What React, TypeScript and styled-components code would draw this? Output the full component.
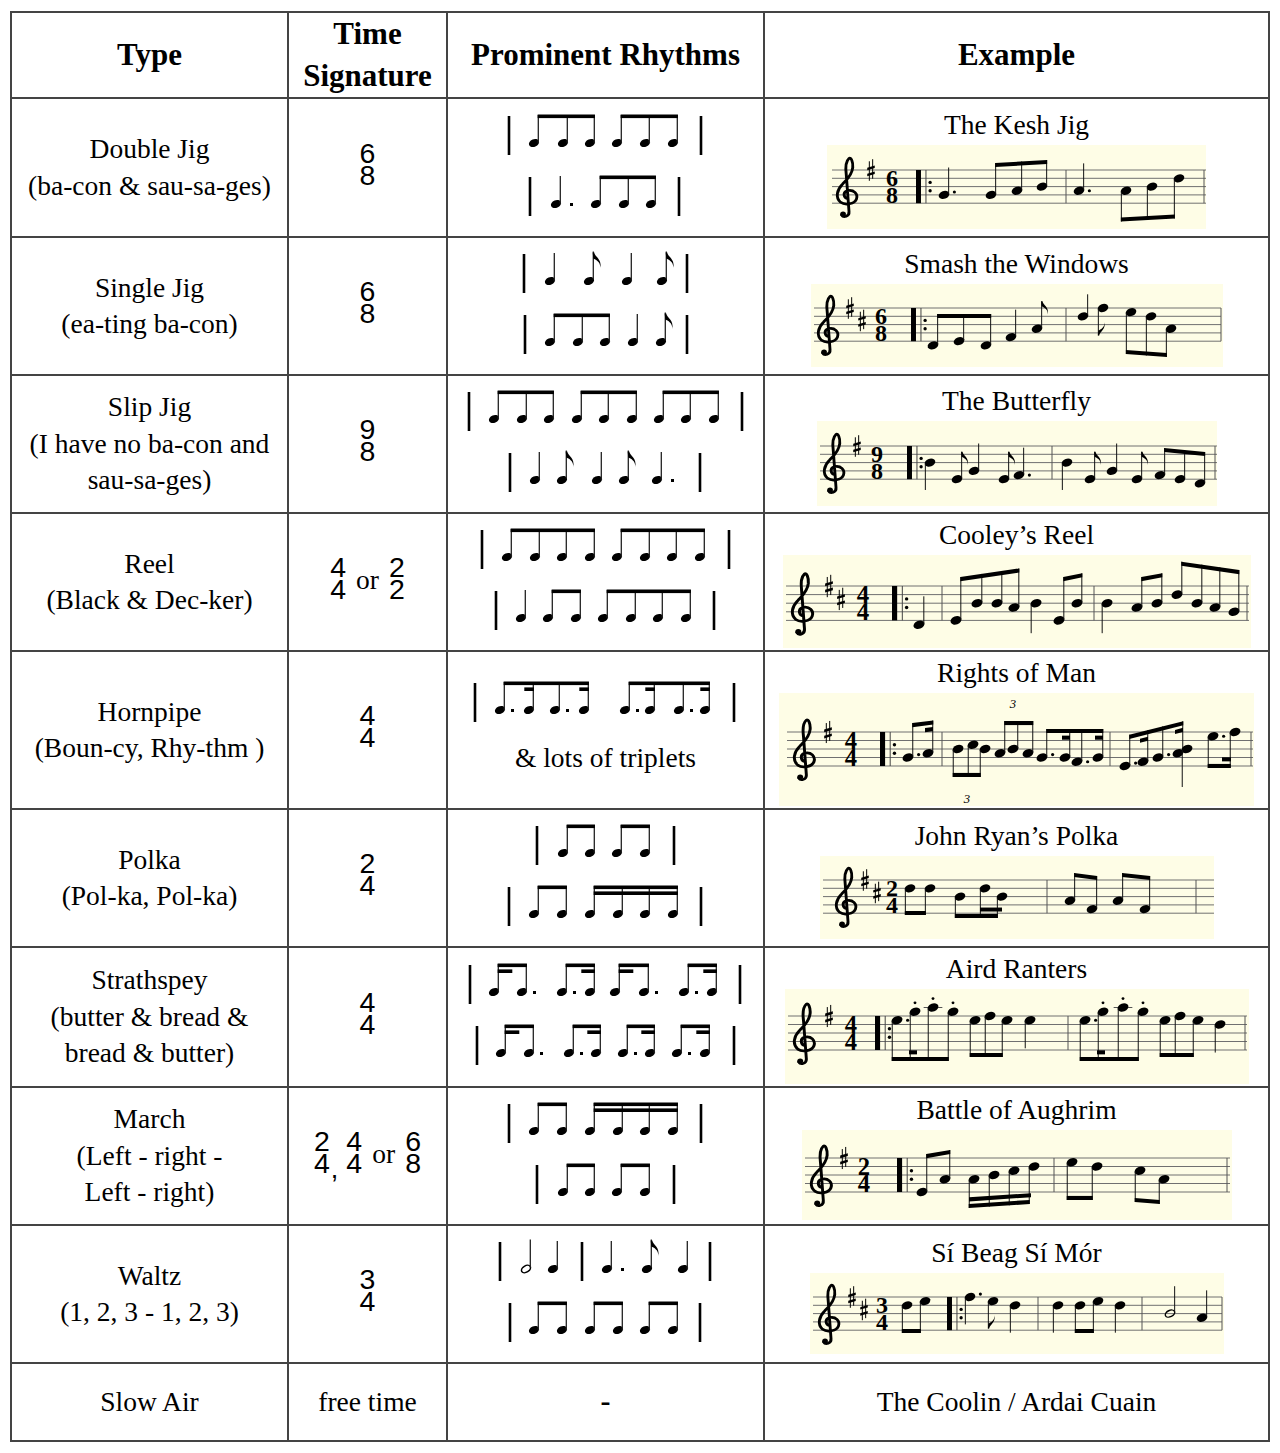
import React from "react";
import styled, { createGlobalStyle } from "styled-components";

const GlobalStyle = createGlobalStyle`
  body {
    margin: 0;
    background: #fff;
  }
`;

const Page = styled.div`
  padding: 11px 10px;
  font-family: "Liberation Serif", "Times New Roman", serif;
  color: #000;
`;

const Table = styled.table`
  border-collapse: collapse;
  table-layout: fixed;
  width: 1258px;
`;

const Col = styled.col<{ $w: number }>`
  width: ${(p) => p.$w}px;
`;

const Row = styled.tr<{ $h: number }>`
  height: ${(p) => p.$h}px;
`;

const HeadCell = styled.th`
  border: 2px solid #444;
  padding: 0;
  font-size: 31px;
  line-height: 42px;
  font-weight: 700;
  text-align: center;
  vertical-align: middle;
`;

const Cell = styled.td`
  border: 2px solid #444;
  padding: 0;
  font-size: 27.5px;
  line-height: 36.5px;
  text-align: center;
  vertical-align: middle;
`;

const RhythmCell = styled(Cell)`
  padding-bottom: 5px;
`;

const RhythmStack = styled.div`
  display: flex;
  flex-direction: column;
  align-items: center;
  gap: 15px;
`;

const SigWrap = styled.div`
  display: flex;
  justify-content: center;
  align-items: center;
  gap: 10px;
  padding-bottom: 8px;
  line-height: 22px;
`;

const Frac = styled.span`
  display: block;
  text-align: center;
  font-family: "Liberation Sans", Arial, sans-serif;
  font-size: 28.5px;
  line-height: 22px;
`;

const Comma = styled.span`
  align-self: flex-end;
  margin-left: -9px;
  margin-right: -2px;
  margin-bottom: -6px;
  font-family: "Liberation Sans", Arial, sans-serif;
  font-size: 27px;
`;

const Or = styled.span`
  font-size: 27.5px;
  padding-top: 4px;
`;

const Dash = styled.span`
  font-weight: 700;
  font-size: 30px;
`;

const ExampleBox = styled.div`
  display: flex;
  flex-direction: column;
  align-items: center;
`;

const ExTitle = styled.div`
  line-height: 36px;
`;

const Sheet = styled.svg`
  display: block;
  margin-top: 2px;
`;

const LineSvg = styled.svg`
  display: block;
`;

/* ---------- rhythm lines (page x coordinates) ---------- */

type RNote = [number, string]; // q quarter, d dotted quarter, e flagged eighth, h half, b beamed, B beamed dotted
type RLine = {
  bars: number[];
  notes: RNote[];
  beams?: [number, number, number][];
  parts?: [number, number, number?][];
};

const RX0 = 446;
const HY = 31;

const rFlag = (sx: number) =>
  `M${sx - 0.65} 2.5 h1.6 c0.6 4.5 8 6.5 6 15.5 c0.6 -6 -4.5 -8.5 -6.95 -9.5 z`;

function RhythmLine({ line }: { line: RLine }) {
  const sx = (cx: number) => cx + 4.3;
  return (
    <LineSvg width={317} height={46} viewBox={`${RX0} 0 317 46`}>
      {line.bars.map((x) => (
        <rect key={"bar" + x} x={x - 1.3} y={4} width={2.6} height={39} fill="#000" />
      ))}
      {line.notes.map(([x, t], i) => (
        <g key={i}>
          {t === "h" ? (
            <ellipse
              cx={x}
              cy={HY}
              rx={4.9}
              ry={3.2}
              transform={`rotate(-32 ${x} ${HY})`}
              fill="none"
              stroke="#000"
              strokeWidth={1.5}
            />
          ) : (
            <ellipse cx={x} cy={HY} rx={5.3} ry={3.8} transform={`rotate(-22 ${x} ${HY})`} fill="#000" />
          )}
          <rect x={sx(x) - 0.65} y={t === "h" || t === "e" ? 1.5 : 3} width={1.3} height={HY - 3} fill="#222" />
          {(t === "d" || t === "B") && <rect x={x + (t === "d" ? 14 : 11)} y={HY - 1} width={3} height={3} fill="#000" />}
          {t === "e" && <path d={rFlag(sx(x))} fill="#000" />}
        </g>
      ))}
      {(line.beams || []).map(([a, b, lv], i) => {
        const x1 = sx(line.notes[a][0]) - 0.65;
        const x2 = sx(line.notes[b][0]) + 0.65;
        const y = lv === 1 ? 2.5 : 8.4;
        return <rect key={"bm" + i} x={x1} y={y} width={x2 - x1} height={3.6} fill="#000" />;
      })}
      {(line.parts || []).map(([a, dir, len], i) => {
        const s = sx(line.notes[a][0]);
        const l = len ?? 11;
        const x1 = dir > 0 ? s - 0.65 : s - l;
        return <rect key={"pt" + i} x={x1} y={8.4} width={l + 0.65} height={3.6} fill="#000" />;
      })}
    </LineSvg>
  );
}

/* ---------- example staves ---------- */

type SN = {
  x: number;
  s: number;
  d: "u" | "d";
  dot?: boolean;
  flag?: boolean;
  half?: boolean;
  len?: number;
  st?: boolean;
};
type SB = { n: number[]; y1: number; y2: number; sub?: [number, number][] };
type Ex = {
  title: string;
  w: number;
  h: number;
  top: number;
  sp: number;
  x0: number;
  x1: number;
  clef: number;
  keys: [number, number][];
  ts: [number, string, string];
  rep?: number;
  bars: number[];
  notes: SN[];
  beams: SB[];
  texts?: [number, number, string][];
};

const CLEF =
  "M13 35 C8 34 7 27 12 25 C19 23 24 29 22 35 C20 41 10 43 5 39 C-1 33 1 24 7 17 C11 12 17 7 18 -3 C18.5 -10 16 -16 14 -14 C11 -11 10 -4 11 5 L14 50 C14.5 56 8 58 6 54";

function Sharp({ x, y, sp }: { x: number; y: number; sp: number }) {
  const t = sp * 0.3;
  const hw = sp * 0.45;
  return (
    <g>
      <line x1={x - sp * 0.2} y1={y - sp * 1.05} x2={x - sp * 0.2} y2={y + sp * 1.3} stroke="#000" strokeWidth={1} />
      <line x1={x + sp * 0.2} y1={y - sp * 1.3} x2={x + sp * 0.2} y2={y + sp * 1.05} stroke="#000" strokeWidth={1} />
      <polygon
        points={`${x - hw},${y - sp * 0.28} ${x + hw},${y - sp * 0.55} ${x + hw},${y - sp * 0.55 + t} ${x - hw},${y - sp * 0.28 + t}`}
        fill="#000"
      />
      <polygon
        points={`${x - hw},${y + sp * 0.45} ${x + hw},${y + sp * 0.18} ${x + hw},${y + sp * 0.18 + t} ${x - hw},${y + sp * 0.45 + t}`}
        fill="#000"
      />
    </g>
  );
}

function Staff({ ex }: { ex: Ex }) {
  const { sp, top } = ex;
  const bot = top + 4 * sp;
  const yOf = (s: number) => bot - (s * sp) / 2;
  const stemX = (n: SN) => (n.d === "u" ? n.x + sp * 0.56 : n.x - sp * 0.56);
  const tips = ex.notes.map((n) => {
    const L = n.len ?? 3.3 * sp;
    return n.d === "u" ? yOf(n.s) - L : yOf(n.s) + L;
  });
  const bt = sp * 0.48;
  const beamEls: React.ReactNode[] = [];
  ex.beams.forEach((b, bi) => {
    const first = ex.notes[b.n[0]];
    const last = ex.notes[b.n[b.n.length - 1]];
    const xa = stemX(first);
    const xb = stemX(last);
    const lineY = (x: number) => b.y1 + ((b.y2 - b.y1) * (x - xa)) / (xb - xa);
    b.n.forEach((i) => {
      tips[i] = lineY(stemX(ex.notes[i]));
    });
    const sg = first.d === "u" ? 1 : -1;
    const poly = (x1: number, x2: number, off: number) => {
      const y1 = lineY(x1) + sg * off;
      const y2 = lineY(x2) + sg * off;
      return `${x1},${y1} ${x2},${y2} ${x2},${y2 + sg * bt} ${x1},${y1 + sg * bt}`;
    };
    beamEls.push(<polygon key={"b" + bi} points={poly(xa - 0.5, xb + 0.5, 0)} fill="#000" />);
    (b.sub || []).forEach(([s1, s2], si) => {
      beamEls.push(<polygon key={"s" + bi + "-" + si} points={poly(s1, s2, sp * 0.78)} fill="#000" />);
    });
  });
  const sc = sp / 10;
  return (
    <Sheet width={ex.w} height={ex.h} viewBox={`0 0 ${ex.w} ${ex.h}`}>
      <rect x={0} y={0} width={ex.w} height={ex.h} fill="#FEFDE6" />
      {[0, 1, 2, 3, 4].map((k) => (
        <line key={k} x1={ex.x0} x2={ex.x1} y1={top + k * sp} y2={top + k * sp} stroke="#707070" strokeWidth={1} />
      ))}
      <g transform={`translate(${ex.clef} ${top}) scale(${sc * 1.12} ${sc})`}>
        <path d={CLEF} fill="none" stroke="#000" strokeWidth={3.1} strokeLinecap="round" />
        <circle cx={7.6} cy={53} r={3.1} fill="#000" />
      </g>
      {ex.keys.map(([x, s], i) => (
        <Sharp key={i} x={x} y={yOf(s)} sp={sp} />
      ))}
      <text fontSize={sp * 2.9} fontWeight={700} textAnchor="middle" fontFamily="Liberation Serif, serif">
        <tspan x={ex.ts[0]} y={top + 2 * sp - 0.3}>
          {ex.ts[1]}
        </tspan>
        <tspan x={ex.ts[0]} y={bot - 0.3}>
          {ex.ts[2]}
        </tspan>
      </text>
      {ex.rep !== undefined && (
        <g>
          <rect x={ex.rep} y={top} width={sp * 0.6} height={4 * sp} fill="#000" />
          <line x1={ex.rep + sp * 1.2} x2={ex.rep + sp * 1.2} y1={top} y2={bot} stroke="#444" strokeWidth={1} />
          <circle cx={ex.rep + sp * 1.7} cy={top + 1.5 * sp} r={sp * 0.2} fill="#000" />
          <circle cx={ex.rep + sp * 1.7} cy={top + 2.5 * sp} r={sp * 0.2} fill="#000" />
        </g>
      )}
      {ex.bars.map((x) => (
        <line key={"bar" + x} x1={x} x2={x} y1={top} y2={bot} stroke="#555" strokeWidth={1} />
      ))}
      {ex.notes.map((n, i) => {
        const y = yOf(n.s);
        const sx = stemX(n);
        const ledgers: number[] = [];
        for (let s = 10; s <= n.s; s += 2) ledgers.push(yOf(s));
        for (let s = -2; s >= n.s; s -= 2) ledgers.push(yOf(s));
        const onLine = n.s % 2 === 0;
        return (
          <g key={i}>
            {ledgers.map((ly, li) => (
              <line key={li} x1={n.x - sp * 1.1} x2={n.x + sp * 1.1} y1={ly} y2={ly} stroke="#555" strokeWidth={1} />
            ))}
            {n.half ? (
              <ellipse
                cx={n.x}
                cy={y}
                rx={sp * 0.6}
                ry={sp * 0.38}
                transform={`rotate(-25 ${n.x} ${y})`}
                fill="none"
                stroke="#000"
                strokeWidth={1.4}
              />
            ) : (
              <ellipse cx={n.x} cy={y} rx={sp * 0.66} ry={sp * 0.47} transform={`rotate(-20 ${n.x} ${y})`} fill="#000" />
            )}
            <line x1={sx} x2={sx} y1={y + (n.d === "u" ? -1 : 1)} y2={tips[i]} stroke="#111" strokeWidth={1} />
            {n.dot && <circle cx={n.x + sp * 1.25} cy={onLine ? y - sp * 0.35 : y} r={sp * 0.19} fill="#000" />}
            {n.st && <circle cx={n.x} cy={n.d === "u" ? y + sp * 1.05 : y - sp * 1.05} r={sp * 0.17} fill="#000" />}
            {n.flag && (
              <path
                transform={`translate(${sx} ${tips[i]}) scale(${sp / 8.5} ${n.d === "u" ? sp / 8.5 : -sp / 8.5})`}
                d="M-0.5 0 h1.4 c0.6 4 7 6 5.3 13.5 c0.4 -5.5 -4 -7.5 -6.2 -8.5 z"
                fill="#000"
              />
            )}
          </g>
        );
      })}
      {beamEls}
      {(ex.texts || []).map(([x, y, t], i) => (
        <text
          key={"t" + i}
          x={x}
          y={y}
          fontSize={sp * 1.5}
          fontStyle="italic"
          textAnchor="middle"
          fontFamily="Liberation Serif, serif"
        >
          {t}
        </text>
      ))}
    </Sheet>
  );
}

/* ---------- data ---------- */

const b8 = (xs: number[]): RNote[] => xs.map((x) => [x, "b"] as RNote);

const RH: Record<string, RLine[]> = {
  doubleJig: [
    { bars: [508, 700], notes: b8([533, 562, 589, 616, 644, 672]), beams: [[0, 2, 1], [3, 5, 1]] },
    { bars: [529, 678], notes: [[555, "d"], [595, "b"], [623, "b"], [650, "b"]], beams: [[1, 3, 1]] },
  ],
  singleJig: [
    { bars: [523, 686], notes: [[549, "q"], [588, "e"], [626, "q"], [661, "e"]] },
    { bars: [524, 686], notes: [[549, "b"], [577, "b"], [604, "b"], [632, "q"], [660, "e"]], beams: [[0, 2, 1]] },
  ],
  slipJig: [
    {
      bars: [468, 741],
      notes: b8([493, 521, 548, 576, 603, 631, 658, 685, 713]),
      beams: [[0, 2, 1], [3, 5, 1], [6, 8, 1]],
    },
    { bars: [509, 699], notes: [[534, "q"], [561, "e"], [596, "q"], [623, "e"], [656, "d"]] },
  ],
  reel: [
    { bars: [481, 728], notes: b8([506, 534, 561, 589, 616, 644, 671, 699]), beams: [[0, 3, 1], [4, 7, 1]] },
    {
      bars: [495, 713],
      notes: [[520, "q"], ...b8([547, 575, 602, 630, 657, 685])],
      beams: [[1, 2, 1], [3, 6, 1]],
    },
  ],
  hornpipe: [
    {
      bars: [474, 733],
      notes: [[499, "B"], [528, "b"], [554, "B"], [583, "b"], [624, "B"], [649, "b"], [678, "B"], [704, "b"]],
      beams: [[0, 3, 1], [4, 7, 1]],
      parts: [[1, -1, 9], [3, -1, 9], [5, -1, 9], [7, -1, 9]],
    },
  ],
  polka: [
    { bars: [536, 673], notes: b8([562, 589, 616, 644]), beams: [[0, 1, 1], [2, 3, 1]] },
    { bars: [508, 700], notes: b8([533, 561, 589, 617, 644, 672]), beams: [[0, 1, 1], [2, 5, 1], [2, 5, 2]] },
  ],
  strathspey: [
    {
      bars: [469, 739],
      notes: [[493, "b"], [521, "B"], [561, "B"], [589, "b"], [614, "b"], [643, "B"], [683, "B"], [711, "b"]],
      beams: [[0, 1, 1], [2, 3, 1], [4, 5, 1], [6, 7, 1]],
      parts: [[0, 1, 14], [3, -1, 13], [4, 1, 14], [7, -1, 13]],
    },
    {
      bars: [476, 733],
      notes: [[500, "b"], [528, "B"], [568, "B"], [595, "b"], [622, "B"], [649, "b"], [676, "B"], [704, "b"]],
      beams: [[0, 1, 1], [2, 3, 1], [4, 5, 1], [6, 7, 1]],
      parts: [[0, 1, 14], [3, -1, 13], [5, -1, 13], [7, -1, 13]],
    },
  ],
  march: [
    { bars: [508, 700], notes: b8([533, 561, 589, 617, 644, 672]), beams: [[0, 1, 1], [2, 5, 1], [2, 5, 2]] },
    { bars: [536, 673], notes: b8([562, 589, 616, 644]), beams: [[0, 1, 1], [2, 3, 1]] },
  ],
  waltz: [
    { bars: [499, 581, 709], notes: [[525, "h"], [552, "q"], [606, "d"], [646, "e"], [682, "q"]] },
    { bars: [509, 699], notes: b8([533, 561, 589, 617, 644, 672]), beams: [[0, 1, 1], [2, 3, 1], [4, 5, 1]] },
  ],
};

const KESH: Ex = {
  title: "The Kesh Jig",
  w: 379,
  h: 84,
  top: 25,
  sp: 8.3,
  x0: 5,
  x1: 379,
  clef: 9,
  keys: [[44, 8]],
  ts: [65, "6", "8"],
  rep: 89,
  bars: [239, 377],
  notes: [
    { x: 117, s: 2, d: "u", dot: true },
    { x: 164, s: 2, d: "u" },
    { x: 190, s: 3, d: "u" },
    { x: 215, s: 4, d: "u" },
    { x: 252, s: 3, d: "u", dot: true },
    { x: 299, s: 3, d: "d" },
    { x: 325, s: 4, d: "d" },
    { x: 352, s: 6, d: "d" },
  ],
  beams: [
    { n: [1, 2, 3], y1: 18, y2: 15 },
    { n: [5, 6, 7], y1: 76.5, y2: 73.5 },
  ],
};

const SMASH: Ex = {
  title: "Smash the Windows",
  w: 412,
  h: 83,
  top: 24,
  sp: 8.3,
  x0: 3,
  x1: 410,
  clef: 6,
  keys: [[39, 8], [51, 5]],
  ts: [70, "6", "8"],
  rep: 100,
  bars: [255, 410],
  notes: [
    { x: 122, s: -1, d: "u" },
    { x: 148, s: 0, d: "u" },
    { x: 175, s: -1, d: "u" },
    { x: 200, s: 1, d: "u" },
    { x: 226, s: 3, d: "u", flag: true },
    { x: 272, s: 6, d: "u", len: 22 },
    { x: 292, s: 8, d: "d", flag: true },
    { x: 320, s: 7, d: "d" },
    { x: 340, s: 6, d: "d" },
    { x: 360, s: 3, d: "d" },
  ],
  beams: [
    { n: [0, 1, 2], y1: 30, y2: 30 },
    { n: [7, 8, 9], y1: 70, y2: 73 },
  ],
};

const BUTTERFLY: Ex = {
  title: "The Butterfly",
  w: 400,
  h: 85,
  top: 25,
  sp: 8.3,
  x0: 3,
  x1: 400,
  clef: 6,
  keys: [[40, 8]],
  ts: [60, "9", "8"],
  rep: 90,
  bars: [235, 398],
  notes: [
    { x: 113, s: 4, d: "d" },
    { x: 140, s: 0, d: "u", flag: true },
    { x: 157, s: 2, d: "u" },
    { x: 187, s: 0, d: "u", flag: true },
    { x: 202, s: 1, d: "u", dot: true },
    { x: 250, s: 4, d: "d" },
    { x: 273, s: 0, d: "u", flag: true },
    { x: 295, s: 2, d: "u" },
    { x: 320, s: 0, d: "u", flag: true },
    { x: 343, s: 1, d: "u" },
    { x: 363, s: 0, d: "u" },
    { x: 383, s: -1, d: "u" },
  ],
  beams: [{ n: [9, 10, 11], y1: 27, y2: 31 }],
};

const COOLEY: Ex = {
  title: "Cooley\u2019s Reel",
  w: 468,
  h: 93,
  top: 31,
  sp: 8.6,
  x0: 3,
  x1: 466,
  clef: 8,
  keys: [[46, 8], [58, 5]],
  ts: [80, "4", "4"],
  rep: 109,
  bars: [159, 311, 464],
  notes: [
    { x: 136, s: -1, d: "u" },
    { x: 173, s: 0, d: "u" },
    { x: 194, s: 4, d: "u" },
    { x: 214, s: 4, d: "u" },
    { x: 231, s: 3, d: "u" },
    { x: 253, s: 4, d: "d", len: 30 },
    { x: 276, s: 0, d: "u" },
    { x: 294, s: 4, d: "u" },
    { x: 324, s: 4, d: "d", len: 30 },
    { x: 354, s: 3, d: "u" },
    { x: 374, s: 4, d: "u" },
    { x: 394, s: 6, d: "u" },
    { x: 414, s: 4, d: "u" },
    { x: 432, s: 3, d: "u" },
    { x: 451, s: 2, d: "u" },
  ],
  beams: [
    { n: [1, 2, 3, 4], y1: 22, y2: 13.5 },
    { n: [6, 7], y1: 22, y2: 18.3 },
    { n: [9, 10], y1: 22, y2: 18.3 },
    { n: [11, 12, 13, 14], y1: 6.7, y2: 15 },
  ],
};

const RIGHTS: Ex = {
  title: "Rights of Man",
  w: 475,
  h: 113,
  top: 39,
  sp: 8.5,
  x0: 8,
  x1: 474,
  clef: 14,
  keys: [[49, 8]],
  ts: [72, "4", "4"],
  rep: 101,
  bars: [163, 331, 472],
  notes: [
    { x: 129, s: 2, d: "u", dot: true },
    { x: 149, s: 3, d: "u" },
    { x: 179, s: 4, d: "d" },
    { x: 194, s: 5, d: "d" },
    { x: 206, s: 4, d: "d" },
    { x: 221, s: 3, d: "u" },
    { x: 234, s: 4, d: "u" },
    { x: 249, s: 3, d: "u" },
    { x: 263, s: 2, d: "u", dot: true },
    { x: 286, s: 2, d: "u" },
    { x: 298, s: 1, d: "u", dot: true },
    { x: 319, s: 2, d: "u" },
    { x: 346, s: 0, d: "u", dot: true },
    { x: 364, s: 1, d: "u" },
    { x: 379, s: 2, d: "u", dot: true },
    { x: 399, s: 3, d: "u" },
    { x: 408, s: 4, d: "d", len: 38 },
    { x: 434, s: 7, d: "d", dot: true },
    { x: 456, s: 8, d: "d" },
  ],
  beams: [
    { n: [0, 1], y1: 30, y2: 27.5, sub: [[146, 154]] },
    { n: [2, 3, 4], y1: 84, y2: 84 },
    { n: [5, 6, 7], y1: 28, y2: 28 },
    { n: [8, 9, 10, 11], y1: 36, y2: 36, sub: [[283, 291], [316, 324]] },
    { n: [12, 13, 14, 15], y1: 41.7, y2: 28.3, sub: [[361, 369], [396, 404]] },
    { n: [17, 18], y1: 75, y2: 75, sub: [[443, 452]] },
  ],
  texts: [
    [234, 15, "3"],
    [188, 110, "3"],
    [149, 121, "3"],
  ],
};

const RYAN: Ex = {
  title: "John Ryan\u2019s Polka",
  w: 394,
  h: 83,
  top: 24,
  sp: 8.3,
  x0: 3,
  x1: 394,
  clef: 15,
  keys: [[45, 8], [57, 5]],
  ts: [72, "2", "4"],
  bars: [227, 376],
  notes: [
    { x: 90, s: 6, d: "d" },
    { x: 110, s: 6, d: "d" },
    { x: 140, s: 4, d: "d" },
    { x: 165, s: 6, d: "d" },
    { x: 182, s: 4, d: "d" },
    { x: 250, s: 3, d: "u" },
    { x: 272, s: 1, d: "u" },
    { x: 298, s: 3, d: "u" },
    { x: 325, s: 1, d: "u" },
  ],
  beams: [
    { n: [0, 1], y1: 59, y2: 59 },
    { n: [2, 3, 4], y1: 62, y2: 62, sub: [[160, 182]] },
    { n: [5, 6], y1: 17, y2: 20 },
    { n: [7, 8], y1: 17, y2: 20 },
  ],
};

const AIRD: Ex = {
  title: "Aird Ranters",
  w: 464,
  h: 95,
  top: 27,
  sp: 8.5,
  x0: 3,
  x1: 462,
  clef: 8,
  keys: [[44, 8]],
  ts: [66, "4", "4"],
  rep: 90,
  bars: [283, 460],
  notes: [
    { x: 112, s: 7, d: "d", dot: true },
    { x: 130, s: 9, d: "d", st: true },
    { x: 148, s: 10, d: "d", st: true },
    { x: 168, s: 9, d: "d", st: true },
    { x: 190, s: 7, d: "d" },
    { x: 205, s: 8, d: "d" },
    { x: 222, s: 7, d: "d" },
    { x: 245, s: 7, d: "d" },
    { x: 300, s: 7, d: "d", dot: true },
    { x: 318, s: 9, d: "d", st: true },
    { x: 338, s: 10, d: "d", st: true },
    { x: 358, s: 9, d: "d", st: true },
    { x: 380, s: 7, d: "d" },
    { x: 395, s: 8, d: "d" },
    { x: 413, s: 7, d: "d" },
    { x: 435, s: 6, d: "d" },
  ],
  beams: [
    { n: [0, 1, 2, 3], y1: 72, y2: 72, sub: [[124, 132]] },
    { n: [4, 5, 6], y1: 68, y2: 68 },
    { n: [8, 9, 10, 11], y1: 72, y2: 72, sub: [[312, 320]] },
    { n: [12, 13, 14], y1: 68, y2: 68 },
  ],
};

const BATTLE: Ex = {
  title: "Battle of Aughrim",
  w: 430,
  h: 90,
  top: 28,
  sp: 8.5,
  x0: 3,
  x1: 428,
  clef: 8,
  keys: [[42, 8]],
  ts: [62, "2", "4"],
  rep: 95,
  bars: [252, 425],
  notes: [
    { x: 120, s: 0, d: "u" },
    { x: 143, s: 3, d: "u" },
    { x: 172, s: 3, d: "d" },
    { x: 192, s: 4, d: "d" },
    { x: 212, s: 5, d: "d" },
    { x: 232, s: 6, d: "d" },
    { x: 270, s: 7, d: "d" },
    { x: 295, s: 6, d: "d" },
    { x: 338, s: 5, d: "d" },
    { x: 362, s: 3, d: "d" },
  ],
  beams: [
    { n: [0, 1], y1: 24, y2: 20 },
    { n: [2, 3, 4, 5], y1: 78, y2: 74, sub: [[167, 229]] },
    { n: [6, 7], y1: 70, y2: 70 },
    { n: [8, 9], y1: 72, y2: 74 },
  ],
};

const SIBEAG: Ex = {
  title: "S\u00ed Beag S\u00ed M\u00f3r",
  w: 414,
  h: 81,
  top: 24,
  sp: 8.3,
  x0: 3,
  x1: 412,
  clef: 8,
  keys: [[42, 8], [54, 5]],
  ts: [72, "3", "4"],
  rep: 137,
  bars: [228, 332, 412],
  notes: [
    { x: 97, s: 6, d: "d" },
    { x: 115, s: 7, d: "d" },
    { x: 160, s: 8, d: "d", dot: true },
    { x: 183, s: 7, d: "d", flag: true },
    { x: 205, s: 6, d: "d" },
    { x: 248, s: 6, d: "d" },
    { x: 270, s: 6, d: "d" },
    { x: 288, s: 7, d: "d" },
    { x: 310, s: 6, d: "d" },
    { x: 360, s: 4, d: "u", half: true },
    { x: 392, s: 3, d: "u" },
  ],
  beams: [
    { n: [0, 1], y1: 60, y2: 60 },
    { n: [6, 7], y1: 60, y2: 60 },
  ],
};

type RowData = {
  h: number;
  type: string[];
  sig: React.ReactNode;
  rhythm?: RLine[];
  extra?: string;
  ex?: Ex;
  exText?: string;
};

const F = ({ n, d }: { n: string; d: string }) => (
  <Frac>
    {n}
    <br />
    {d}
  </Frac>
);

const ROWS: RowData[] = [
  { h: 139, type: ["Double Jig", "(ba-con & sau-sa-ges)"], sig: <F n="6" d="8" />, rhythm: RH.doubleJig, ex: KESH },
  { h: 138, type: ["Single Jig", "(ea-ting ba-con)"], sig: <F n="6" d="8" />, rhythm: RH.singleJig, ex: SMASH },
  {
    h: 138,
    type: ["Slip Jig", "(I have no ba-con and", "sau-sa-ges)"],
    sig: <F n="9" d="8" />,
    rhythm: RH.slipJig,
    ex: BUTTERFLY,
  },
  {
    h: 138,
    type: ["Reel", "(Black & Dec-ker)"],
    sig: (
      <>
        <F n="4" d="4" />
        <Or>or</Or>
        <F n="2" d="2" />
      </>
    ),
    rhythm: RH.reel,
    ex: COOLEY,
  },
  {
    h: 158,
    type: ["Hornpipe", "(Boun-cy, Rhy-thm )"],
    sig: <F n="4" d="4" />,
    rhythm: RH.hornpipe,
    extra: "& lots of triplets",
    ex: RIGHTS,
  },
  { h: 138, type: ["Polka", "(Pol-ka, Pol-ka)"], sig: <F n="2" d="4" />, rhythm: RH.polka, ex: RYAN },
  {
    h: 140,
    type: ["Strathspey", "(butter & bread &", "bread & butter)"],
    sig: <F n="4" d="4" />,
    rhythm: RH.strathspey,
    ex: AIRD,
  },
  {
    h: 138,
    type: ["March", "(Left - right -", "Left - right)"],
    sig: (
      <>
        <F n="2" d="4" />
        <Comma>,</Comma>
        <F n="4" d="4" />
        <Or>or</Or>
        <F n="6" d="8" />
      </>
    ),
    rhythm: RH.march,
    ex: BATTLE,
  },
  { h: 138, type: ["Waltz", "(1, 2, 3 - 1, 2, 3)"], sig: <F n="3" d="4" />, rhythm: RH.waltz, ex: SIBEAG },
  { h: 78, type: ["Slow Air"], sig: null, exText: "The Coolin / Ardai Cuain" },
];

export default function App() {
  return (
    <>
      <GlobalStyle />
      <Page>
        <Table>
          <colgroup>
            <Col $w={277} />
            <Col $w={159} />
            <Col $w={317} />
            <Col $w={505} />
          </colgroup>
          <thead>
            <Row $h={84}>
              <HeadCell>Type</HeadCell>
              <HeadCell>
                Time
                <br />
                Signature
              </HeadCell>
              <HeadCell>Prominent Rhythms</HeadCell>
              <HeadCell>Example</HeadCell>
            </Row>
          </thead>
          <tbody>
            {ROWS.map((r, i) => (
              <Row key={i} $h={r.h}>
                <Cell>
                  {r.type.map((t, k) => (
                    <div key={k}>{t}</div>
                  ))}
                </Cell>
                <Cell>{r.sig ? <SigWrap>{r.sig}</SigWrap> : "free time"}</Cell>
                {r.rhythm ? (
                  <RhythmCell>
                    <RhythmStack>
                      {r.rhythm.map((l, k) => (
                        <RhythmLine key={k} line={l} />
                      ))}
                      {r.extra && <div>{r.extra}</div>}
                    </RhythmStack>
                  </RhythmCell>
                ) : (
                  <Cell>
                    <Dash>-</Dash>
                  </Cell>
                )}
                <Cell>
                  {r.ex ? (
                    <ExampleBox>
                      <ExTitle>{r.ex.title}</ExTitle>
                      <Staff ex={r.ex} />
                    </ExampleBox>
                  ) : (
                    r.exText
                  )}
                </Cell>
              </Row>
            ))}
          </tbody>
        </Table>
      </Page>
    </>
  );
}
